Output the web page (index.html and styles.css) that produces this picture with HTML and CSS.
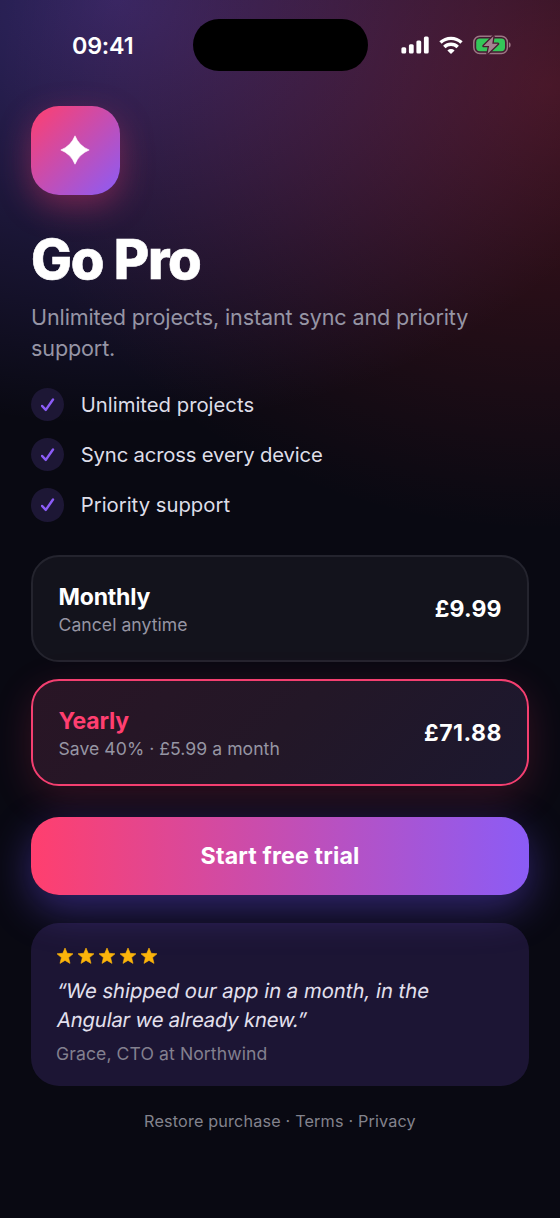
FILE: index.html
```html
<!DOCTYPE html>
<html lang="en">
<head>
<meta charset="utf-8">
<meta name="viewport" content="width=device-width, initial-scale=1">
<title>Go Pro</title>
<link rel="stylesheet" href="styles.css">
</head>
<body>
<div class="screen">
  <header class="status">
    <div class="status-time"><span>09:41</span></div>
    <div class="island"></div>
    <div class="status-icons">
      <svg width="28" height="18" viewBox="0 0 28 18" fill="#fff"><rect x="0.4" y="11.2" width="4.8" height="6.4" rx="1.5"/><rect x="7.9" y="8.2" width="4.8" height="9.4" rx="1.5"/><rect x="15.4" y="4.4" width="4.8" height="13.2" rx="1.5"/><rect x="22.9" y="0.4" width="4.8" height="17.2" rx="1.5"/></svg>
      <svg width="24" height="18" viewBox="0 0 24 18" fill="none" stroke="#fff" stroke-width="3.4"><path d="M1.5 6.6a15.2 15.2 0 0 1 21 0"/><path d="M5.3 11a9.6 9.6 0 0 1 13.4 0"/><path d="M12 18l-3.6-3.6a5.2 5.2 0 0 1 7.2 0z" fill="#fff" stroke="none"/></svg>
      <svg class="battery" width="38" height="20" viewBox="0 0 38 20"><rect x="0.8" y="1.3" width="33.6" height="17.2" rx="6" fill="none" stroke="#9c7684" stroke-width="1.5"/><path d="M36 7.2c2.2.7 2.2 4.7 0 5.4z" fill="#9c7684"/><rect x="3.2" y="3.6" width="28.8" height="12.6" rx="3.6" fill="#34c759"/><path d="M20.4 1.2L10.6 11h5.5L14.6 18.8 25 8.8h-5.7z" fill="#a48390" stroke="#481a30" stroke-width="2.6" stroke-linejoin="round" paint-order="stroke"/></svg>
    </div>
  </header>
  <main class="content">
    <div class="app-icon"><svg width="30" height="30" viewBox="0 0 30 30"><path d="M15 .8Q19 11 29.2 15 19 19 15 29.2 11 19 .8 15 11 11 15 .8z" fill="#fff" stroke="#fff" stroke-width=".6" stroke-linejoin="round"/></svg></div>
    <h1 class="title">Go Pro</h1>
    <p class="subtitle">Unlimited projects, instant sync and priority support.</p>
    <ul class="features">
      <li class="feature"><span class="tick"><svg width="14" height="14" viewBox="0 0 14 14"><path d="M1 7.9 4.8 11.9 12 1.5"/></svg></span><span class="feature-text">Unlimited projects</span></li>
      <li class="feature"><span class="tick"><svg width="14" height="14" viewBox="0 0 14 14"><path d="M1 7.9 4.8 11.9 12 1.5"/></svg></span><span class="feature-text tight">Sync across every device</span></li>
      <li class="feature"><span class="tick"><svg width="14" height="14" viewBox="0 0 14 14"><path d="M1 7.9 4.8 11.9 12 1.5"/></svg></span><span class="feature-text">Priority support</span></li>
    </ul>
    <section class="plans">
      <div class="plan">
        <div><div class="plan-name">Monthly</div><div class="plan-note">Cancel anytime</div></div>
        <div class="price">£9.99</div>
      </div>
      <div class="plan selected">
        <div><div class="plan-name">Yearly</div><div class="plan-note">Save 40% · £5.99 a month</div></div>
        <div class="price">£71.88</div>
      </div>
    </section>
    <button class="cta"><span>Start free trial</span></button>
    <section class="review">
      <div class="stars">
        <svg viewBox="0 0 16 16"><path d="M8 0l2.2 5.3 5.8.5-4.4 3.8 1.4 5.8L8 12.4 3 15.4l1.4-5.8L0 5.8l5.8-.5z"/></svg>
        <svg viewBox="0 0 16 16"><path d="M8 0l2.2 5.3 5.8.5-4.4 3.8 1.4 5.8L8 12.4 3 15.4l1.4-5.8L0 5.8l5.8-.5z"/></svg>
        <svg viewBox="0 0 16 16"><path d="M8 0l2.2 5.3 5.8.5-4.4 3.8 1.4 5.8L8 12.4 3 15.4l1.4-5.8L0 5.8l5.8-.5z"/></svg>
        <svg viewBox="0 0 16 16"><path d="M8 0l2.2 5.3 5.8.5-4.4 3.8 1.4 5.8L8 12.4 3 15.4l1.4-5.8L0 5.8l5.8-.5z"/></svg>
        <svg viewBox="0 0 16 16"><path d="M8 0l2.2 5.3 5.8.5-4.4 3.8 1.4 5.8L8 12.4 3 15.4l1.4-5.8L0 5.8l5.8-.5z"/></svg>
      </div>
      <p class="quote"><span>“We shipped our app in a month, in the</span><span class="tight">Angular we already knew.”</span></p>
      <p class="author">Grace, CTO at Northwind</p>
    </section>
    <footer class="legal">Restore purchase · Terms · Privacy</footer>
  </main>
</div>
</body>
</html>
```

FILE: styles.css
```css
* { box-sizing: border-box; margin: 0; padding: 0; }
body { background: #090912; font-family: Inter, "Liberation Sans", sans-serif; color: #fff; }
.screen {
  width: 560px; height: 1218px; overflow: hidden;
  background:
    radial-gradient(ellipse 550px 445px at 98% 7%, rgba(255, 50, 60, .23), rgba(255, 50, 60, 0) 100%),
    radial-gradient(ellipse 570px 425px at 21% 0%, rgba(124, 92, 255, .35), rgba(124, 92, 255, 0) 100%),
    #090912;
}
.status { display: grid; grid-template-columns: 192.5px 175px 1fr; height: 106px; padding-top: 19px; align-items: start; }
.status-time { height: 53px; display: flex; align-items: center; padding-left: 72px; font-size: 23.3px; font-weight: 600; letter-spacing: -.2px; }
.island { height: 52px; border-radius: 26px; background: #000; }
.status-icons { height: 52px; display: flex; align-items: center; padding-left: 33.5px; gap: 10px; }
.content { padding: 0 31px; display: flex; flex-direction: column; }
.app-icon {
  width: 89px; height: 89px; border-radius: 28px; display: flex; align-items: center; justify-content: center;
  padding: 0 2px 2px 0;
  background: linear-gradient(135deg, #ff3f6e, #8b5cf6);
  box-shadow: 0 11px 33px rgba(255, 61, 113, .37);
}
.title { margin-top: 32px; font-size: 54.5px; line-height: 64px; font-weight: 800; letter-spacing: -1.3px; -webkit-text-stroke: .6px #fff; }
.subtitle { margin-top: 11px; font-size: 21.6px; line-height: 31px; letter-spacing: -.14px; color: #9695a5; }
.features { list-style: none; margin-top: 24px; display: grid; gap: 17px; }
.feature { display: flex; align-items: center; gap: 16.4px; height: 33.2px; font-size: 20.3px; color: #dedee8; }
.tight { letter-spacing: -.18px; }
.tick { width: 33.4px; height: 33.4px; border-radius: 50%; background: #1d1735; display: flex; align-items: center; justify-content: center; }
.tick path { fill: none; stroke: #8b5cf6; stroke-width: 2.4; stroke-linecap: round; stroke-linejoin: round; }
.plans { margin-top: 33.4px; display: grid; gap: 17px; }
.plan {
  height: 107px; border: 2px solid #24242e; border-radius: 28px; background: #13131c;
  padding: 2px 25.5px 0; display: flex; align-items: center; justify-content: space-between;
}
.plan.selected {
  border-color: #f43f70;
  background: linear-gradient(135deg, #291525, #231727 50%, #1c182f);
  box-shadow: 0 11px 39px rgba(255, 61, 113, .18);
}
.plan-name { font-size: 23px; line-height: 29px; font-weight: 700; letter-spacing: -.2px; }
.selected .plan-name { color: #ff3f70; }
.plan-note { font-size: 17.6px; line-height: 22px; margin-top: 2px; letter-spacing: .04px; color: #9695a3; }
.price { font-size: 23px; font-weight: 700; letter-spacing: .1px; }
.selected .price { letter-spacing: .5px; margin-right: -.5px; }
.cta {
  margin-top: 31px; height: 78px; border: 0; border-radius: 28px; color: #fff;
  font: 650 23.2px Inter, "Liberation Sans", sans-serif; letter-spacing: .15px;
  background: linear-gradient(90deg, #ff3f6e, #8b5cf6);
  box-shadow: 0 14px 42px rgba(110, 80, 255, .4);
}
.review { margin-top: 28px; height: 163.5px; border-radius: 28px; background: rgba(139, 92, 246, .15); padding: 25px; }
.stars { display: flex; gap: 5.1px; height: 16px; padding-left: .7px; }
.stars svg { width: 16px; height: 16px; fill: #fbb40b; stroke: #fbb40b; stroke-width: .6; stroke-linejoin: round; }
.quote { margin-top: 12px; font-size: 20.3px; line-height: 29.3px; color: #e3e0ee; }
.quote span { display: block; width: max-content; transform: skewX(-10deg); transform-origin: 0 75%; }
.author { margin-top: 8px; font-size: 17.6px; line-height: 22px; letter-spacing: .09px; color: #83808f; }
.legal { margin-top: 24px; font-size: 16.2px; line-height: 22px; text-align: center; letter-spacing: .17px; color: #83838d; }
```
